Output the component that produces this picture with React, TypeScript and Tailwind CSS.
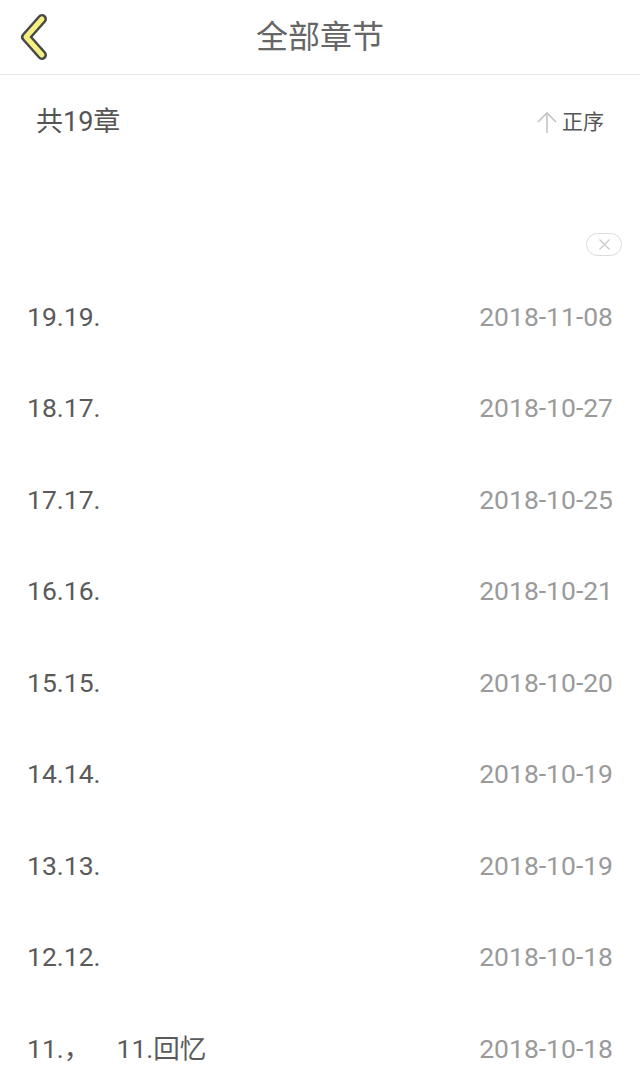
import React from "react";

const rows: [string, string][] = [
  ["19.19.", "2018-11-08"],
  ["18.17.", "2018-10-27"],
  ["17.17.", "2018-10-25"],
  ["16.16.", "2018-10-21"],
  ["15.15.", "2018-10-20"],
  ["14.14.", "2018-10-19"],
  ["13.13.", "2018-10-19"],
  ["12.12.", "2018-10-18"],
  ["11.，    11.回忆", "2018-10-18"],
];

export default function App() {
  return (
    <div
      className="w-[640px] h-[1092px] bg-white overflow-hidden"
      style={{ fontFamily: 'Roboto, "Noto Sans CJK SC", sans-serif' }}
    >
      <div className="relative h-[75px] border-b border-[#e6e6e6] flex items-center justify-center">
        <svg
          className="absolute left-[15px] top-[10px]"
          width="36"
          height="54"
          viewBox="0 0 36 54"
        >
          <polyline
            points="27,9 11,27 27,45"
            fill="none"
            stroke="#484848"
            strokeWidth="10"
            strokeLinecap="round"
            strokeLinejoin="round"
          />
          <polyline
            points="27,9 11,27 27,45"
            fill="none"
            stroke="#f6ef82"
            strokeWidth="5"
            strokeLinecap="round"
            strokeLinejoin="round"
          />
        </svg>
        <span className="text-[32px] text-[#666] leading-none">全部章节</span>
      </div>

      <div className="h-[94px] flex items-center justify-between pl-[36px] pr-[36px]">
        <span className="text-[27px] text-[#555] leading-none">共19章</span>
        <div className="flex items-center gap-[5px]">
          <svg width="20" height="24" viewBox="0 0 20 24">
            <line x1="10" y1="3" x2="10" y2="23" stroke="#c4c4c4" strokeWidth="1.6" />
            <polyline points="1,12 10,3 19,12" fill="none" stroke="#c4c4c4" strokeWidth="1.6" />
          </svg>
          <span className="text-[21px] text-[#555] leading-none">正序</span>
        </div>
      </div>

      <div className="h-[102px] flex items-end justify-end pr-[18px] pb-[15px]">
        <div className="w-[36px] h-[23px] rounded-full border border-[#dcdcdc] flex items-center justify-center">
          <svg width="13" height="13" viewBox="0 0 13 13">
            <line x1="1.5" y1="1.5" x2="11.5" y2="11.5" stroke="#c8c8c8" strokeWidth="1.2" />
            <line x1="11.5" y1="1.5" x2="1.5" y2="11.5" stroke="#c8c8c8" strokeWidth="1.2" />
          </svg>
        </div>
      </div>

      <div className="flex flex-col">
        {rows.map(([t, d], i) => (
          <div
            key={i}
            className="h-[91.5px] shrink-0 flex items-center justify-between pl-[27px] pr-[27px]"
          >
            <span className="text-[26.5px] text-[#5a5a5a] leading-none whitespace-pre">{t}</span>
            <span className="text-[26.5px] text-[#9a9a9a] leading-none">{d}</span>
          </div>
        ))}
      </div>
    </div>
  );
}
